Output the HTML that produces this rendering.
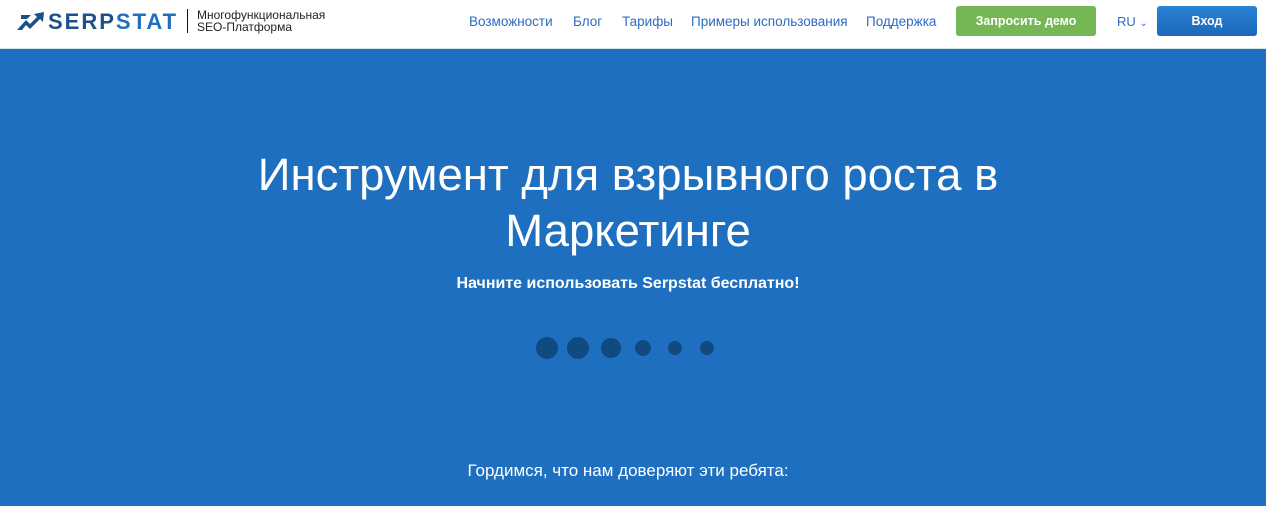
<!DOCTYPE html>
<html><head><meta charset="utf-8"><style>
*{margin:0;padding:0;box-sizing:border-box}
body{width:1266px;height:506px;overflow:hidden;background:#1e6fbf;font-family:"Liberation Sans",sans-serif;position:relative}
.hdr{position:absolute;left:0;top:0;width:1266px;height:49px;background:#fff;border-bottom:1px solid #dde3ea}
.abs{position:absolute;white-space:nowrap}
.nav{top:14px;font-size:13.5px;color:#2d6bc0}
.btn{position:absolute;top:6px;height:30px;border-radius:3px;color:#fff;font-weight:bold;font-size:12.5px;text-align:center;line-height:30px}
.dot{position:absolute;border-radius:50%;background:#0f4a80}
</style></head><body>
<div class="hdr">
<svg class="abs" style="left:17px;top:12px" width="28" height="18" viewBox="0 0 28 18"><path d="M0 18 L9 8 L13 12 L20 5 L17 2 L27 0 L26 10 L23 7 L13 17 L9 13 L5 18Z" fill="#1d4f8a"/><path d="M4 3 H14 L10 7 H4Z" fill="#1d4f8a"/></svg>
<div class="abs" style="left:48px;top:9px;font-size:22px;font-weight:bold;letter-spacing:2px;color:#1d4f8a">SERP<span style="color:#1f6fc0">STAT</span></div>
<div class="abs" style="left:187px;top:9px;width:1px;height:24px;background:#111"></div>
<div class="abs" style="left:197px;top:9px;font-size:12px;line-height:12px;color:#222">Многофункциональная<br>SEO-Платформа</div>
<div class="abs nav" style="left:469px">Возможности</div>
<div class="abs nav" style="left:573px">Блог</div>
<div class="abs nav" style="left:622px">Тарифы</div>
<div class="abs nav" style="left:691px">Примеры использования</div>
<div class="abs nav" style="left:866px">Поддержка</div>
<div class="btn" style="left:956px;width:140px;background:#75b755">Запросить демо</div>
<div class="abs" style="left:1117px;top:14px;font-size:13px;color:#2d6bc0">RU <span style="font-size:10px">&#8964;</span></div>
<div class="btn" style="left:1157px;width:100px;background:linear-gradient(#2a82d6,#1c67b8)">Вход</div>
</div>
<div class="abs" style="left:0;width:1256px;top:147px;text-align:center;color:#fff;font-size:45.5px;line-height:56px;font-weight:300">Инструмент для взрывного роста в<br>Маркетинге</div>
<div class="abs" style="left:0;width:1256px;top:275px;text-align:center;color:#fff;font-size:16px;font-weight:bold">Начните использовать Serpstat бесплатно!</div>
<div class="dot" style="left:536px;top:337px;width:22px;height:22px"></div>
<div class="dot" style="left:567px;top:337px;width:22px;height:22px"></div>
<div class="dot" style="left:601px;top:338px;width:20px;height:20px"></div>
<div class="dot" style="left:635px;top:340px;width:16px;height:16px"></div>
<div class="dot" style="left:668px;top:341px;width:14px;height:14px"></div>
<div class="dot" style="left:700px;top:341px;width:14px;height:14px"></div>
<div class="abs" style="left:0;width:1256px;top:461px;text-align:center;color:#fff;font-size:17px">Гордимся, что нам доверяют эти ребята:</div>
</body></html>
